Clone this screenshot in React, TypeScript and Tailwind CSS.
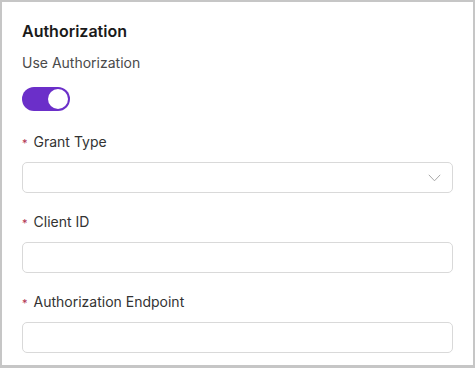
import { useState } from 'react';

interface FieldProps {
  label: string;
  select?: boolean;
}

function Field({ label, select }: FieldProps) {
  return (
    <div className="flex flex-col gap-[10px]">
      <label className="flex items-center text-[14px] leading-[20px] text-[#333333]">
        <span className="mr-[6px] mt-[2px] text-[11px] leading-none text-[#b0304f]">*</span>
        {label}
      </label>
      <div className="relative h-[31px] rounded-[5px] border border-[#d9d9d9] bg-white">
        {select ? (
          <svg
            className="absolute right-[11px] top-[11px]"
            width="13"
            height="8"
            viewBox="0 0 13 8"
            fill="none"
          >
            <path d="M0.8 0.8 L6.5 6.8 L12.2 0.8" stroke="#a8a8a8" strokeWidth="1" />
          </svg>
        ) : (
          <input className="h-full w-full rounded-[5px] bg-transparent px-3 text-[14px] outline-none" />
        )}
      </div>
    </div>
  );
}

export default function App() {
  const [enabled, setEnabled] = useState(true);

  return (
    <div
      className="h-[368px] w-[475px] overflow-hidden border-x-2 border-t-2 border-b-[3px] border-[#c6c6c6] bg-white px-5 pt-[19px]"
      style={{ fontFamily: 'Inter, "Noto Sans", sans-serif' }}
    >
      <h2 className="text-[16px] font-semibold leading-[20px] text-[#1a1a1a]">Authorization</h2>
      <p className="mt-3 text-[14px] leading-[20px] text-[#4a4a4a]">Use Authorization</p>
      <button
        type="button"
        onClick={() => setEnabled(!enabled)}
        className={`mt-[14px] flex h-[24px] w-[48px] items-center rounded-full px-[2px] ${
          enabled ? 'justify-end bg-[#6b2fc9]' : 'justify-start bg-[#cccccc]'
        }`}
      >
        <span className="h-[20px] w-[20px] rounded-full bg-white" />
      </button>
      <div className="mt-[21px] flex flex-col gap-[19px]">
        <Field label="Grant Type" select />
        <Field label="Client ID" />
        <Field label="Authorization Endpoint" />
      </div>
    </div>
  );
}
